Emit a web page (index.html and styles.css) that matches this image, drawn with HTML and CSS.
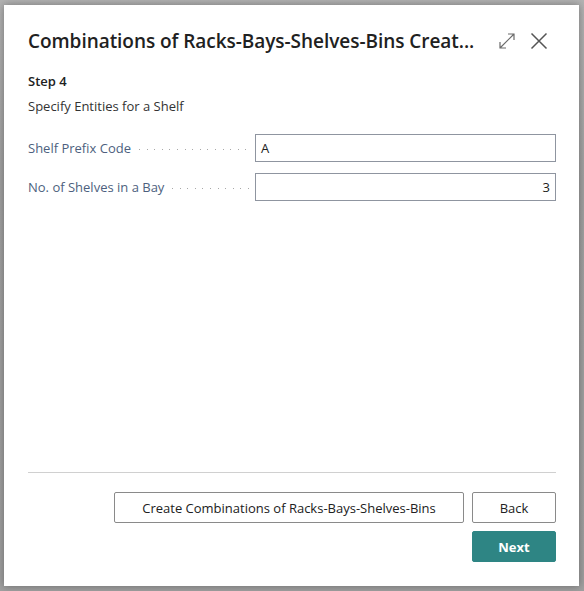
FILE: index.html
```html
<!DOCTYPE html>
<html>
<head>
<meta charset="utf-8">
<link rel="stylesheet" href="styles.css">
</head>
<body>
<div class="backdrop">
  <div class="dialog">
    <div class="header">
      <div class="title">Combinations of Racks-Bays-Shelves-Bins Creat...</div>
      <div class="icons">
        <svg class="icon" width="18" height="18" viewBox="0 0 18 18" fill="none" stroke="#6b6b6b" stroke-width="1.2">
          <path d="M2 16 L16 2 M10 2 H16 V8 M2 10 V16 H8"/>
        </svg>
        <svg class="icon" width="18" height="18" viewBox="0 0 18 18" fill="none" stroke="#555" stroke-width="1.5">
          <path d="M1.5 1.5 L16.5 16.5 M16.5 1.5 L1.5 16.5"/>
        </svg>
      </div>
    </div>
    <div class="content">
      <div class="step">Step 4</div>
      <div class="desc">Specify Entities for a Shelf</div>
      <div class="fields">
        <div class="row">
          <div class="label"><span>Shelf Prefix Code</span><span class="dots"></span></div>
          <div class="input">A</div>
        </div>
        <div class="row">
          <div class="label"><span>No. of Shelves in a Bay</span><span class="dots"></span></div>
          <div class="input num">3</div>
        </div>
      </div>
    </div>
    <div class="footer">
      <div class="btnrow">
        <button class="btn wide">Create Combinations of Racks-Bays-Shelves-Bins</button>
        <button class="btn small">Back</button>
      </div>
      <div class="btnrow">
        <button class="btn small primary">Next</button>
      </div>
    </div>
  </div>
</div>
</body>
</html>
```
FILE: styles.css
```css
html, body {
  margin: 0;
  padding: 0;
}
body {
  width: 584px;
  height: 591px;
  overflow: hidden;
  font-family: "Open Sans", "Noto Sans", sans-serif;
  background: #a4a4a4;
}
.backdrop {
  height: 591px;
  padding: 5px 5px 0 4px;
  box-sizing: border-box;
  background: linear-gradient(#b3b3b3, #a2a2a2 30%, #a0a0a0);
}
.dialog {
  width: 575px;
  height: 581px;
  background: #fff;
  box-shadow: 0 0 8px rgba(0,0,0,0.35);
  display: flex;
  flex-direction: column;
  box-sizing: border-box;
}
.header {
  display: flex;
  align-items: center;
  padding: 22px 31px 0 24px;
  height: 28px;
  box-sizing: content-box;
}
.title {
  flex: 1;
  font-size: 19px;
  font-weight: 600;
  color: #212121;
  white-space: nowrap;
  letter-spacing: -0.05px;
}
.icons {
  display: flex;
  gap: 14px;
  align-items: center;
}
.icon {
  display: block;
}
.content {
  flex: 1;
  padding: 0 23px 0 24px;
}
.step {
  margin-top: 17px;
  font-size: 13px;
  font-weight: 600;
  color: #212121;
  line-height: 18px;
}
.desc {
  margin-top: 7px;
  font-size: 13px;
  color: #333;
  line-height: 18px;
}
.fields {
  margin-top: 19px;
  display: flex;
  flex-direction: column;
  gap: 11px;
}
.row {
  display: flex;
  align-items: center;
  height: 28px;
}
.label {
  width: 227px;
  display: flex;
  align-items: center;
  font-size: 13px;
  color: #4d5f7e;
  white-space: nowrap;
}
.dots {
  flex: 1;
  margin: 3px 4px 0 8px;
  height: 1px;
  background: repeating-linear-gradient(to right, #a8a8a8 0 1px, transparent 1px 7.6px);
}
.input {
  flex: 1;
  height: 28px;
  box-sizing: border-box;
  border: 1px solid #8f95a0;
  font-size: 13px;
  color: #212121;
  padding: 0 5px;
  line-height: 26px;
}
.input.num {
  text-align: right;
}
.footer {
  margin: 0 23px 0 24px;
  border-top: 1px solid #d0d0d0;
  padding: 19px 0 24px;
  display: flex;
  flex-direction: column;
  gap: 8px;
}
.btnrow {
  display: flex;
  justify-content: flex-end;
  gap: 8px;
}
.btn {
  height: 31px;
  box-sizing: border-box;
  border: 1px solid #8a8a8a;
  border-radius: 2px;
  background: #fff;
  font-family: inherit;
  font-size: 13px;
  color: #212121;
  padding: 0;
}
.btn.wide { width: 350px; }
.btn.small { width: 84px; }
.btn.primary {
  background: #2e8584;
  border-color: #2e8584;
  color: #fff;
  font-weight: 700;
}
```
